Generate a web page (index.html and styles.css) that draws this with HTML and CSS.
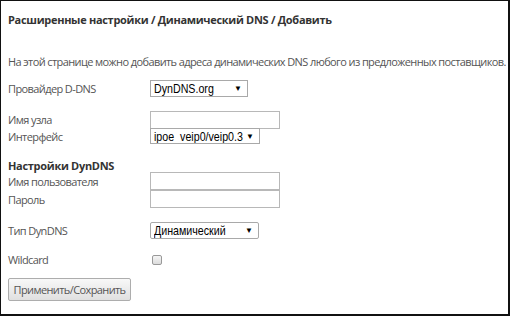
FILE: index.html
```html
<!DOCTYPE html>
<html lang="ru">
<head>
<meta charset="utf-8">
<link rel="stylesheet" href="styles.css">
</head>
<body>
<div class="frame">
  <h1 class="title">Расширенные настройки / Динамический DNS / Добавить</h1>
  <p class="intro">На этой странице можно добавить адреса динамических DNS любого из предложенных поставщиков.</p>

  <div class="row r-provider">
    <span class="label">Провайдер D-DNS</span>
    <div class="select w97"><span>DynDNS.org</span><i>▼</i></div>
  </div>

  <div class="row r-host">
    <span class="label">Имя узла</span>
    <div class="input"></div>
  </div>
  <div class="row r-iface">
    <span class="label">Интерфейс</span>
    <div class="select w109"><span>ipoe_veip0/veip0.3</span><i>▼</i></div>
  </div>

  <h2 class="section">Настройки DynDNS</h2>
  <div class="row r-user">
    <span class="label">Имя пользователя</span>
    <div class="input"></div>
  </div>
  <div class="row r-pass">
    <span class="label">Пароль</span>
    <div class="input"></div>
  </div>

  <div class="row r-type">
    <span class="label">Тип DynDNS</span>
    <div class="select w108 rounded"><span>Динамический</span><i>▼</i></div>
  </div>

  <div class="row r-wild">
    <span class="label">Wildcard</span>
    <span class="checkbox"></span>
  </div>

  <button class="btn" type="button">Применить/Сохранить</button>
</div>
</body>
</html>
```

FILE: styles.css
```css
html, body {
  margin: 0;
  padding: 0;
  background: #fff;
}
.frame {
  box-sizing: border-box;
  width: 510px;
  height: 316px;
  border-top: 1px solid #111;
  border-left: 1px solid #111;
  border-right: 2px solid #111;
  border-bottom: 2px solid #111;
  padding: 0 0 0 7px;
  font-family: "Open Sans", "Noto Sans", sans-serif;
  font-size: 11px;
  letter-spacing: -0.6px;
  color: #555;
}
.title {
  margin: 11px 0 0 0;
  font-size: 11px;
  line-height: 15px;
  font-weight: bold;
  letter-spacing: -0.3px;
  color: #333;
}
.intro {
  margin: 27px 0 0 0;
  line-height: 15px;
  white-space: nowrap;
}
.row {
  display: flex;
  align-items: center;
}
.label {
  width: 142px;
  flex: none;
  line-height: 15px;
}
.r-provider { margin-top: 11px; height: 17px; }
.r-host { margin-top: 14px; height: 17px; }
.r-iface { height: 16px; }
.section {
  margin: 14px 0 0 0;
  font-size: 11px;
  line-height: 15px;
  font-weight: bold;
  letter-spacing: -0.3px;
  color: #333;
}
.r-user { margin-top: -1px; height: 18px; }
.r-pass { margin-top: 0; height: 18px; }
.r-type { margin-top: 14px; height: 17px; }
.r-wild { margin-top: 12px; height: 17px; }

.select {
  box-sizing: border-box;
  height: 17px;
  border: 1px solid #a9a9a9;
  display: flex;
  align-items: center;
  padding: 0 5px 0 3px;
  font-family: "Liberation Sans", Arial, sans-serif;
  font-size: 13px;
  letter-spacing: 0;
  color: #000;
  background: #fff;
  overflow: hidden;
}
.select span {
  flex: 1;
  min-width: 0;
  transform: scaleX(0.82);
  transform-origin: left center;
  white-space: nowrap;
}
.select i {
  flex: none;
  font-style: normal;
  font-size: 8px;
  color: #000;
}
.w97 { width: 98px; }
.w109 { width: 110px; height: 16px; }
.w108 { width: 109px; }
.rounded { border-radius: 2px; }
.input {
  box-sizing: border-box;
  width: 130px;
  height: 18px;
  border: 1px solid #b8b8b8;
  background: #fff;
}
.checkbox {
  box-sizing: border-box;
  display: inline-block;
  width: 10px;
  height: 10px;
  margin-left: 2px;
  border: 1px solid #999;
  border-radius: 2px;
  background: linear-gradient(#f5f5f5, #dcdcdc);
}
.btn {
  display: block;
  box-sizing: border-box;
  margin-top: 10px;
  width: 123px;
  height: 23px;
  padding: 0;
  border: 1px solid #adadad;
  border-radius: 2px;
  background: linear-gradient(#f8f8f8, #e0e0e0);
  font-family: "Open Sans", "Noto Sans", sans-serif;
  font-size: 11px;
  letter-spacing: -0.6px;
  white-space: nowrap;
  color: #555;
}
```
